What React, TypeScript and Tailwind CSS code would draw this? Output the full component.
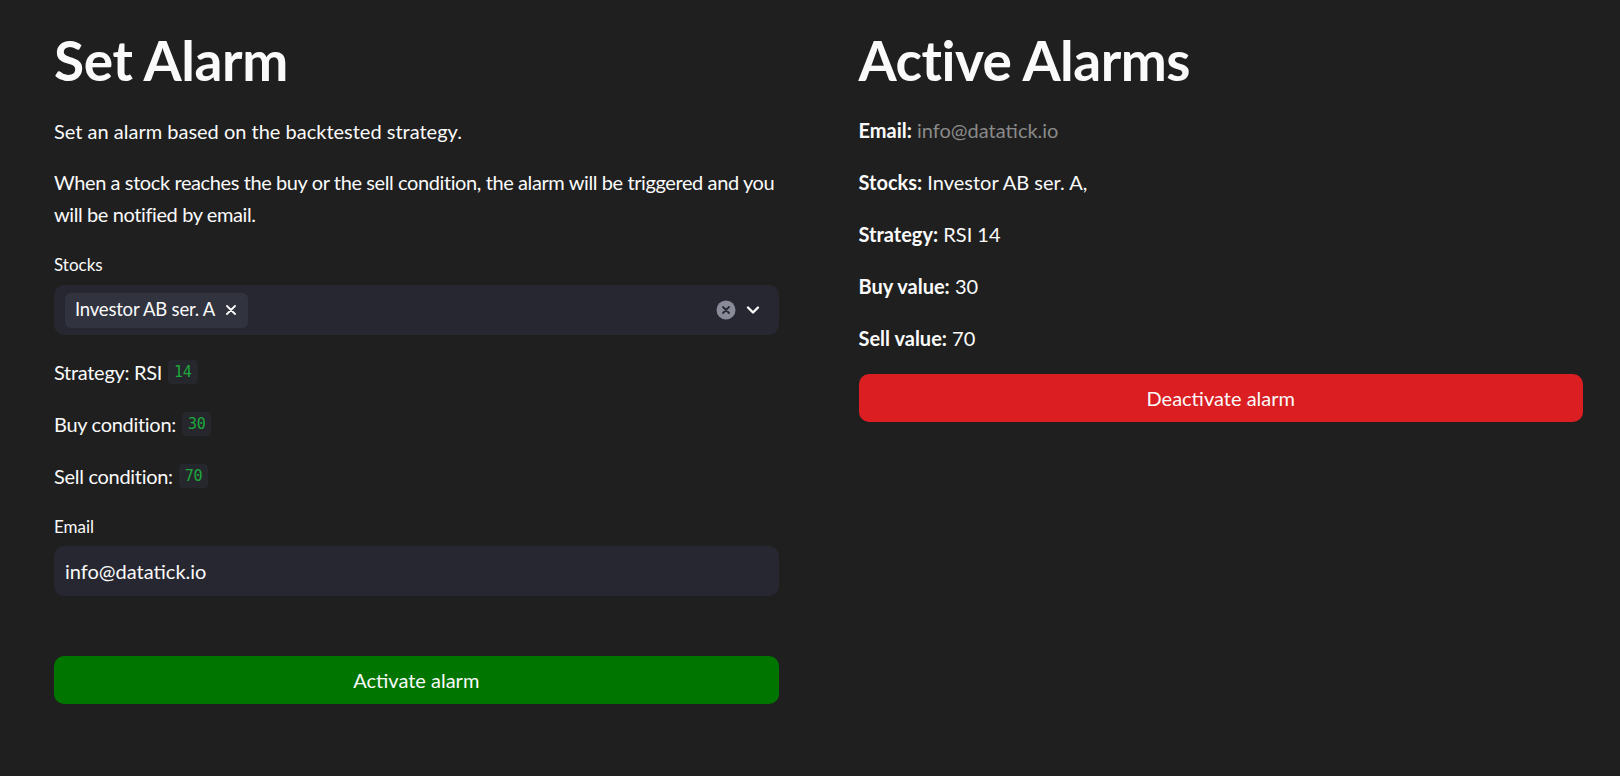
import { useState } from "react";

const font = "font-['Lato','Noto_Sans',sans-serif]";

const Code = ({ children }: { children: React.ReactNode }) => (
    <code className="ml-[6px] inline-block rounded-[4px] bg-[#25272d] px-[6px] font-['DejaVu_Sans_Mono',monospace] text-[15px] leading-[24px] text-[#1fa83c] align-middle">
        {children}
    </code>
);

const SetAlarm = () => {
    const [email, setEmail] = useState("info@datatick.io");

    return (
        <div className="flex flex-col">
            <h1 className="h-[66px] text-[55px] font-bold leading-[66px] tracking-[-0.4px]">Set Alarm</h1>
            <p className="mt-[22px] text-[20px] leading-[32px]">Set an alarm based on the backtested strategy.</p>
            <p className="mt-[19px] text-[20px] leading-[32px] tracking-[-0.4px]">
                When a stock reaches the buy or the sell condition, the alarm will be triggered and you will be notified by email.
            </p>

            <label className="mt-[23px] text-[17px] leading-[24px]">Stocks</label>
            <div className="mt-[8px] flex h-[50px] items-center rounded-[10px] bg-[#262730] pl-[11px] pr-[19px]">
                <span className="flex h-[35px] items-center gap-[11px] rounded-[6px] bg-[#31333f] pl-[10px] pr-[12px] text-[18.5px] tracking-[-0.2px]">
                    Investor AB ser. A
                    <svg width="10" height="10" viewBox="0 0 10 10" fill="none">
                        <path d="M1 1l8 8M9 1l-8 8" stroke="#fafafa" strokeWidth="1.8" strokeLinecap="round" />
                    </svg>
                </span>
                <div className="ml-auto flex items-center gap-[10px]">
                    <svg width="20" height="20" viewBox="0 0 20 20">
                        <circle cx="10" cy="10" r="9.5" fill="#8a8b99" />
                        <path d="M7 7l6 6M13 7l-6 6" stroke="#262730" strokeWidth="1.8" strokeLinecap="round" />
                    </svg>
                    <svg width="14" height="14" viewBox="0 0 14 14" fill="none">
                        <path d="M2 4.5l5 5 5-5" stroke="#fafafa" strokeWidth="2.4" strokeLinecap="round" strokeLinejoin="round" />
                    </svg>
                </div>
            </div>

            <p className="mt-[21px] flex items-center text-[20px] leading-[32px] tracking-[-0.3px]">
                Strategy: RSI <Code>14</Code>
            </p>
            <p className="mt-[20px] flex items-center text-[20px] leading-[32px] tracking-[-0.3px]">
                Buy condition: <Code>30</Code>
            </p>
            <p className="mt-[20px] flex items-center text-[20px] leading-[32px] tracking-[-0.3px]">
                Sell condition: <Code>70</Code>
            </p>

            <label className="mt-[23px] text-[17px] leading-[24px]">Email</label>
            <input
                value={email}
                onChange={(e) => setEmail(e.target.value)}
                className="mt-[7px] h-[50px] rounded-[10px] bg-[#262730] px-[11px] text-[20px] text-[#fafafa] outline-none"
            />

            <button className="mt-[60px] h-[48px] rounded-[10px] bg-[#007500] text-[20px] text-[#fafafa]">
                Activate alarm
            </button>
        </div>
    );
};

const Row = ({ label, value, muted }: { label: string; value: string; muted?: boolean }) => (
    <p className="text-[20px] leading-[32px]">
        <span className="font-bold">{label}</span>{" "}
        <span className={muted ? "text-[#8a8a8a]" : ""}>{value}</span>
    </p>
);

const ActiveAlarms = () => (
    <div className="flex flex-col">
        <h1 className="h-[66px] text-[55px] font-bold leading-[66px] tracking-[-0.5px]">Active Alarms</h1>
        <div className="mt-[21px] flex flex-col gap-[20px]">
            <Row label="Email:" value="info@datatick.io" muted />
            <Row label="Stocks:" value="Investor AB ser. A," />
            <Row label="Strategy:" value="RSI 14" />
            <Row label="Buy value:" value="30" />
            <Row label="Sell value:" value="70" />
        </div>
        <button className="mt-[20px] h-[48px] rounded-[10px] bg-[#da1e21] text-[20px] text-[#fafafa]">
            Deactivate alarm
        </button>
    </div>
);

export default function App() {
    return (
        <div className={`${font} min-h-screen bg-[#1f1f1f] text-[#fafafa]`}>
            <div className="grid grid-cols-2 gap-x-[80px] pl-[54px] pr-[37px] pt-[27px]">
                <SetAlarm />
                <ActiveAlarms />
            </div>
        </div>
    );
}
